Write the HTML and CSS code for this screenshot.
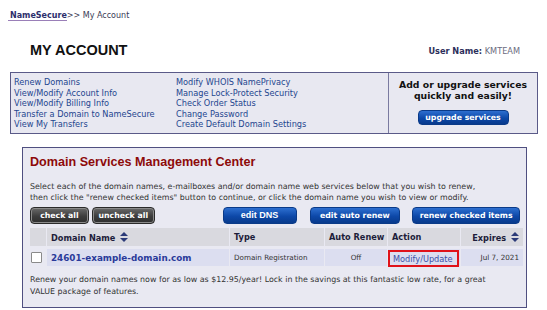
FILE: index.html
```html
<!DOCTYPE html>
<html>
<head>
<meta charset="utf-8">
<link rel="stylesheet" href="styles.css">
</head>
<body>
<div class="crumb"><a class="crumb-link" href="#">NameSecure</a>&gt;&gt; My Account</div>
<div class="header">
  <h1 class="title">MY ACCOUNT</h1>
  <div class="user"><b>User Name:</b> <span class="user-val">KMTEAM</span></div>
</div>
<div class="links-box">
  <div class="links-col">
    <a href="#">Renew Domains</a>
    <a href="#">View/Modify Account Info</a>
    <a href="#">View/Modify Billing Info</a>
    <a href="#">Transfer a Domain to NameSecure</a>
    <a href="#">View My Transfers</a>
  </div>
  <div class="links-col">
    <a href="#">Modify WHOIS NamePrivacy</a>
    <a href="#">Manage Lock-Protect Security</a>
    <a href="#">Check Order Status</a>
    <a href="#">Change Password</a>
    <a href="#">Create Default Domain Settings</a>
  </div>
  <div class="upgrade">
    <div class="upgrade-text">Add or upgrade services<br>quickly and easily!</div>
    <span class="btn btn-blue btn-upgrade">upgrade services</span>
  </div>
</div>
<div class="main-box">
  <h2 class="main-title">Domain Services Management Center</h2>
  <p class="intro">Select each of the domain names, e-mailboxes and/or domain name web services below that you wish to renew,<br>then click the "renew checked items" button to continue, or click the domain name you wish to view or modify.</p>
  <div class="btn-row">
    <span class="btn btn-gray">check all</span>
    <span class="btn btn-gray">uncheck all</span>
    <span class="btn btn-blue btn-dns">edit DNS</span>
    <span class="btn btn-blue btn-auto">edit auto renew</span>
    <span class="btn btn-blue btn-renew">renew checked items</span>
  </div>
  <table class="dtable">
    <thead>
      <tr>
        <th class="c-check"></th>
        <th class="c-name">Domain Name <svg class="sort" width="8" height="10" viewBox="0 0 8 10"><path d="M4 0 L8 4 L0 4 Z M0 6 L8 6 L4 10 Z" fill="#2b3a78"/></svg></th>
        <th class="c-type">Type</th>
        <th class="c-auto">Auto Renew</th>
        <th class="c-action">Action</th>
        <th class="c-exp">Expires <svg class="sort" width="8" height="10" viewBox="0 0 8 10"><path d="M4 0 L8 4 L0 4 Z M0 6 L8 6 L4 10 Z" fill="#2b3a78"/></svg></th>
      </tr>
    </thead>
    <tbody>
      <tr>
        <td class="c-check"><span class="cbox"></span></td>
        <td class="c-name"><a class="dom" href="#">24601-example-domain.com</a></td>
        <td class="c-type small">Domain Registration</td>
        <td class="c-auto small center">Off</td>
        <td class="c-action"><a class="modify" href="#">Modify/Update</a></td>
        <td class="c-exp small">Jul 7, 2021</td>
      </tr>
    </tbody>
  </table>
  <p class="promo">Renew your domain names now for as low as $12.95/year! Lock in the savings at this fantastic low rate, for a great<br>VALUE package of features.</p>
</div>
</body>
</html>
```

FILE: styles.css
```css
body {
  margin: 0;
  background: #ffffff;
  font-family: "DejaVu Sans", Verdana, sans-serif;
  font-size: 8px;
  color: #222;
  width: 547px;
  height: 310px;
  overflow: hidden;
}
a { text-decoration: none; color: #2b3f8f; }

.crumb {
  padding: 11px 0 0 12px;
  height: 12px;
  line-height: 10px;
  color: #3a3a55;
}
.crumb-link {
  font-weight: bold;
  color: #2d2f6b;
  border-bottom: 1px solid #9a7fb8;
  padding-left: 2px;
  margin-left: -4px;
}

.header {
  display: flex;
  justify-content: space-between;
  align-items: center;
  padding: 14px 27px 0 30px;
  height: 25px;
}
.title {
  margin: 0;
  font-family: "Liberation Sans", Arial, sans-serif;
  font-size: 14.5px;
  font-weight: bold;
  color: #111;
}
.user { color: #2d2f5b; font-size: 8.2px; margin-top: 2px; }
.user-val { color: #6b6b80; }

.links-box {
  margin: 10px 9px 0 10px;
  height: 60px;
  border: 1px solid #5a5a88;
  background: #e8e8f1;
  display: flex;
  padding: 0 0 0 3px;
}
.links-col {
  display: flex;
  flex-direction: column;
  padding-top: 4px;
  line-height: 10.5px;
  font-size: 8.2px;
}
.links-col:first-child { width: 162px; }
.links-col:nth-child(2) { width: 212px; }
.links-col a { color: #24468f; white-space: nowrap; }
.upgrade {
  flex: 1;
  border-left: 1px solid #7a7aa0;
  text-align: center;
  padding-top: 6px;
}
.upgrade-text {
  font-weight: bold;
  font-size: 9.3px;
  line-height: 11px;
  color: #111;
}
.btn {
  display: inline-block;
  border-radius: 4px;
  color: #fff;
  font-weight: bold;
  text-align: center;
  box-sizing: border-box;
  white-space: nowrap;
}
.btn-blue {
  background: linear-gradient(#2d6fd0, #0d48a8 55%, #083a8c);
  border: 1px solid #0a3a88;
}
.btn-gray {
  background: linear-gradient(#6a6a6a, #3d3d3d 55%, #2e2e2e);
  border: 1px solid #2a2a2a;
  box-shadow: inset 0 0 0 1px #8a8a8a;
}
.btn-upgrade {
  margin-top: 9px;
  width: 91px;
  height: 15px;
  line-height: 13px;
  font-size: 7.8px;
}

.main-box {
  margin: 13px 20px 0 22px;
  height: 159px;
  border: 1px solid #4f4f80;
  background: #e9e9f2;
  padding: 0 6px 0 7px;
}
.main-title {
  margin: 7px 0 0 0;
  font-family: "Liberation Sans", Arial, sans-serif;
  font-size: 12.6px;
  font-weight: bold;
  color: #8d0a0a;
  line-height: 15px;
}
.intro {
  margin: 11px 0 0 0;
  font-size: 7.9px;
  line-height: 11px;
  color: #333;
  white-space: nowrap;
}
.btn-row {
  display: flex;
  margin-top: 4px;
  height: 17px;
}
.btn-row .btn { height: 17px; line-height: 15px; font-size: 7.8px; }
.btn-row .btn-gray:first-child { width: 59px; }
.btn-row .btn-gray:nth-child(2) { width: 63px; margin-left: 3px; }
.btn-dns { width: 74px; margin-left: 68px; font-family: "Liberation Sans", Arial, sans-serif; font-size: 9px !important; }
.btn-auto { width: 91px; margin-left: 13px; }
.btn-renew { width: 108px; margin-left: 12px; }

.dtable {
  margin-top: 1px;
  border-collapse: separate;
  border-spacing: 1px 3px;
  margin-left: -1px;
  width: 494px;
  table-layout: fixed;
}
.dtable th {
  background: #d9d9df;
  height: 18px;
  padding: 0 4px;
  font-size: 8.2px;
  font-weight: bold;
  color: #1d1d3a;
  text-align: left;
  white-space: nowrap;
}
.dtable th.c-auto { text-align: right; }
.dtable th.c-exp { text-align: right; }
.sort { vertical-align: -1px; margin-left: 2px; }
.c-check { width: 8px; }
.c-name { width: 174px; }
.c-type { width: 86px; }
.c-auto { width: 54px; }
.c-action { width: 64px; }
.c-exp { width: 54px; }
.dtable td {
  background: #dcdef0;
  height: 17px;
  padding: 0 4px;
  white-space: nowrap;
}
.dtable td.c-check { background: #e9e9f2; padding: 0 1px; }
.cbox {
  display: block;
  width: 9px;
  height: 9px;
  border: 1px solid #8a8a8a;
  background: #fff;
  border-radius: 1px;
}
.dom { font-weight: bold; font-size: 8.8px; color: #2a3a9a; }
.small { font-size: 7.2px; color: #333; }
.center { text-align: center; }
.dtable td.c-exp { text-align: right; }
.dtable td.c-action { padding: 0 2px; }
.modify {
  display: block;
  border: 2px solid #e0121a;
  color: #3b4fa8;
  font-size: 8.2px;
  padding: 2px 3px 1px 3px;
  line-height: 10px;
  margin: 0 -1px -1px -2px;
}
.promo {
  margin: 5px 0 0 0;
  font-size: 7.9px;
  line-height: 11.5px;
  color: #333;
  white-space: nowrap;
}
```
